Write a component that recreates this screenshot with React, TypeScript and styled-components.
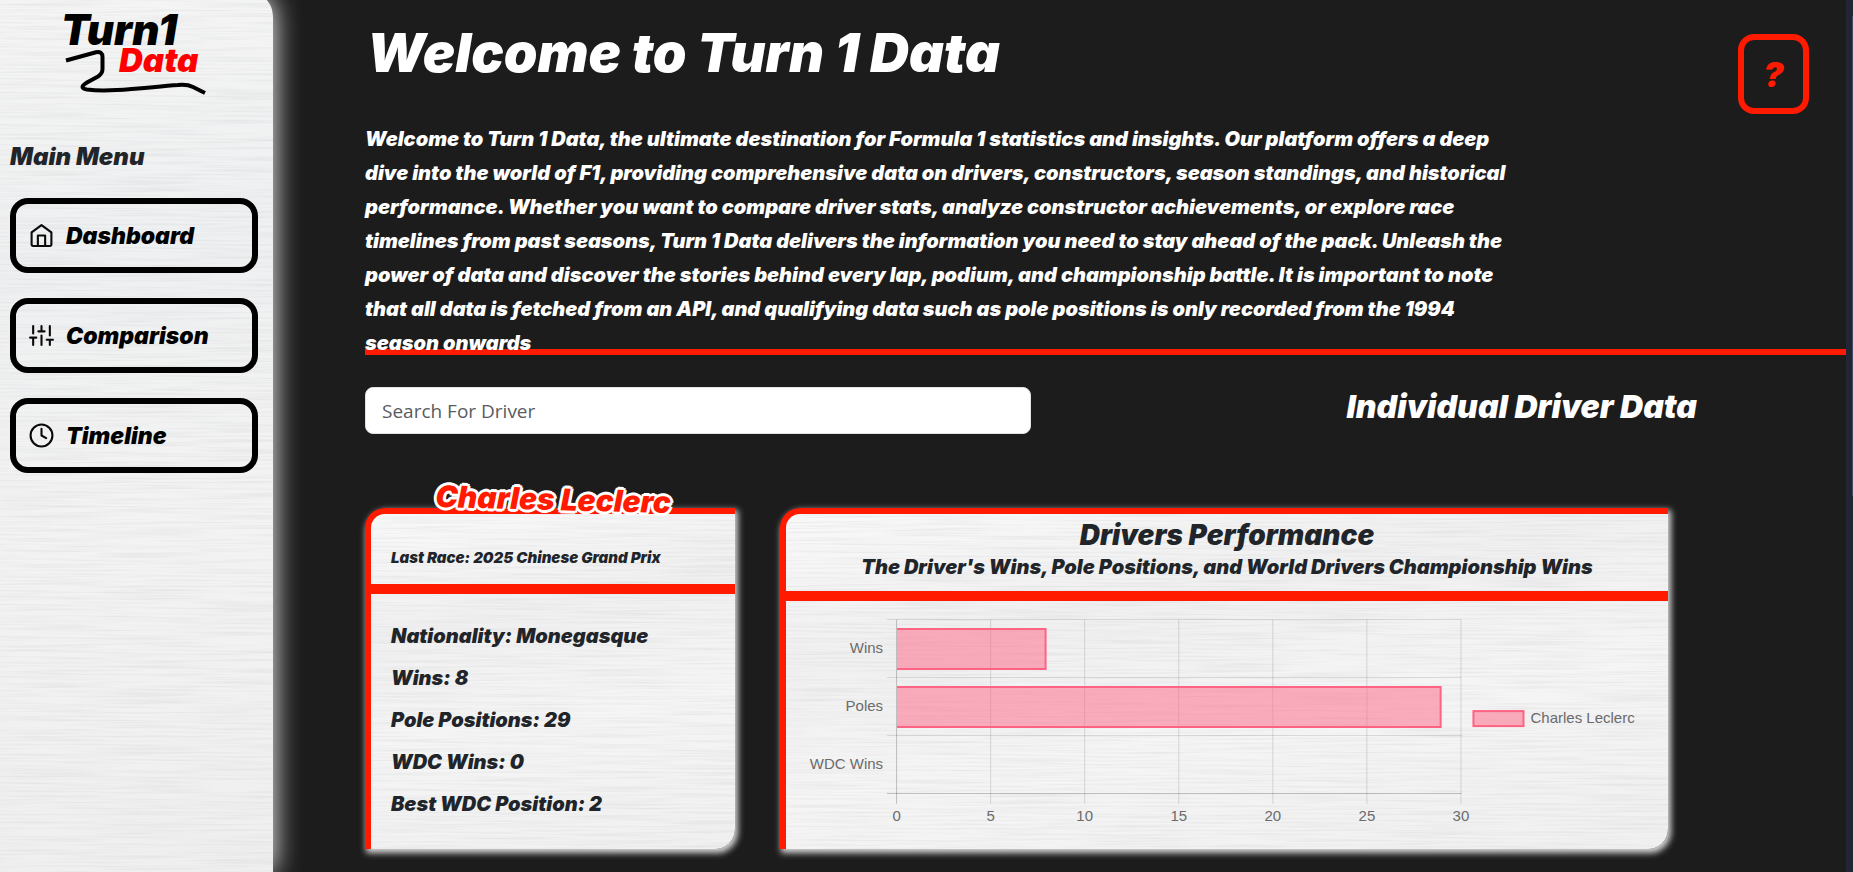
import React from 'react';
import styled, { createGlobalStyle } from 'styled-components';

const RED = '#ff1a00';
const INK = '#212529';

const GlobalStyle = createGlobalStyle`
  *, *::before, *::after { box-sizing: border-box; }
  html, body { margin: 0; background: #1c1c1c; }
  body {
    font-family: Inter, 'Liberation Sans', sans-serif;
    font-weight: 900;
    font-style: italic;
    color: ${INK};
  }
  h1, h2, h3, p, ul { margin: 0; padding: 0; font-weight: inherit; }
`;

const Page = styled.div`
  display: flex;
  min-height: 100vh;
  overflow: hidden;
`;

/* ---------- brushed metal ---------- */

const MetalLayer = styled.svg`
  position: absolute;
  inset: 0;
  width: 100%;
  height: 100%;
  border-radius: inherit;
  z-index: -1;
`;

function Metal({ seed }: { seed: number }) {
  const id = `brushed-${seed}`;
  return (
    <MetalLayer aria-hidden="true">
      <filter id={id} x="0" y="0" width="100%" height="100%">
        <feTurbulence type="fractalNoise" baseFrequency="0.01 0.5" numOctaves="3" seed={seed} />
        <feColorMatrix values="0 0 0 0 0.5  0 0 0 0 0.51  0 0 0 0 0.53  0.5 0 0 0 -0.2" />
      </filter>
      <rect width="100%" height="100%" filter={`url(#${id})`} />
    </MetalLayer>
  );
}

/* ---------- sidebar ---------- */

const Sidebar = styled.aside`
  position: relative;
  z-index: 1;
  flex: 0 0 273px;
  margin-top: -8px;
  padding: 8px 15px 0 10px;
  background: linear-gradient(170deg, #f5f5f5, #eff0f1 30%, #f3f3f3 60%, #efeff0);
  border-radius: 0 24px 0 0;
  box-shadow: 0 0 28px #ffffff;
`;

const Logo = styled.svg`
  display: block;
  width: 150px;
  height: 100px;
  margin-left: 46px;
  overflow: visible;
`;

const MenuTitle = styled.h2`
  margin: 41px 0 25px;
  font-size: 24px;
  line-height: 32px;
`;

const Nav = styled.nav`
  display: flex;
  flex-direction: column;
  gap: 25px;
`;

const NavButton = styled.button`
  display: flex;
  align-items: center;
  gap: 12px;
  height: 75px;
  padding: 0 13px;
  border: 6px solid #000;
  border-radius: 18px;
  background: transparent;
  color: #000;
  font: inherit;
  font-size: 23px;
  text-align: left;
`;

const NavIcon = styled.svg`
  width: 25px;
  height: 25px;
  fill: none;
  stroke: #0a0a0a;
  stroke-width: 2;
  stroke-linecap: round;
  stroke-linejoin: round;
`;

/* ---------- main ---------- */

const Main = styled.main`
  flex: 1;
  min-width: 0;
  padding-left: 92px;
`;

const Intro = styled.header`
  display: flex;
  justify-content: space-between;
  align-items: flex-start;
  padding: 20px 37px 0 0;
`;

const Title = styled.h1`
  padding-left: 2px;
  color: #fff;
  font-size: 54px;
  line-height: 66px;
`;

const Lead = styled.p`
  margin: 36px 0 -11px;
  color: #fff;
  font-size: 20px;
  line-height: 34px;
  white-space: nowrap;
`;

const HelpButton = styled.button`
  flex: none;
  width: 71px;
  height: 80px;
  margin-top: 14px;
  padding: 0;
  border: 6px solid ${RED};
  border-radius: 16px;
  background: transparent;
  color: ${RED};
  font: inherit;
  font-size: 34px;
`;

const Rule = styled.hr<{ $size: number }>`
  height: ${(p) => p.$size}px;
  margin: 0;
  border: 0;
  background: ${RED};
`;

const SearchRow = styled.section`
  display: flex;
  justify-content: space-between;
  align-items: flex-start;
  padding: 32px 149px 0 0;
`;

const SearchInput = styled.input`
  width: 50%;
  height: 47px;
  padding: 0 16px;
  border: 1px solid #dee2e6;
  border-radius: 8px;
  background: #fff;
  color: ${INK};
  font: 400 19px 'Open Sans', 'Noto Sans', sans-serif;
  &::placeholder { color: #595c5f; opacity: 1; }
`;

const SectionTitle = styled.h2`
  color: #fff;
  font-size: 32px;
  line-height: 40px;
`;

const Cards = styled.section`
  display: grid;
  grid-template-columns: 25% 60%;
  column-gap: 3%;
  padding: 74px 0 23px;
`;

const Card = styled.article`
  position: relative;
  z-index: 0;
  border: 0 solid ${RED};
  border-width: 6px 0 0 6px;
  border-radius: 20px 0 20px 0;
  background: linear-gradient(170deg, #f9f9f9, #f0f0f1 30%, #f5f5f5 60%, #f0f0f1);
  box-shadow: 2px 3px 6px 1px #d8d8d8;
`;

const DriverName = styled.h3`
  position: absolute;
  top: -32px;
  left: 0;
  right: 0;
  color: ${RED};
  font-size: 30px;
  line-height: 34px;
  text-align: center;
  transform: rotate(1.5deg);
  text-shadow: 3px 0 #fff, -3px 0 #fff, 0 3px #fff, 0 -3px #fff,
    2px 2px #fff, -2px 2px #fff, 2px -2px #fff, -2px -2px #fff;
`;

const LastRace = styled.p`
  padding: 32px 20px 14px;
  font-size: 15px;
  line-height: 24px;
`;

const Facts = styled.ul`
  padding: 21px 20px 24px;
  list-style: none;
  font-size: 20px;
  line-height: 42px;
`;

const ChartHeader = styled.header`
  padding: 6px 0 7px;
  text-align: center;
`;

const ChartTitle = styled.h3`
  font-size: 28px;
  line-height: 30px;
`;

const ChartNote = styled.p`
  font-size: 20px;
  line-height: 34px;
`;

const Chart = styled.svg`
  display: block;
  width: 100%;
  font: normal 400 15px 'Liberation Sans', Arial, sans-serif;
  fill: #6b6b6b;
`;

const ScrollTrack = styled.div`
  display: flex;
  flex: 0 0 7px;
  align-items: flex-start;
  justify-content: flex-end;
  padding-top: 16px;
  background: #222533;
`;

const ScrollThumb = styled.div`
  width: 1px;
  height: 480px;
  background: #474a60;
`;

/* ---------- content ---------- */

const LEAD_LINES = [
  'Welcome to Turn 1 Data, the ultimate destination for Formula 1 statistics and insights. Our platform offers a deep',
  'dive into the world of F1, providing comprehensive data on drivers, constructors, season standings, and historical',
  'performance. Whether you want to compare driver stats, analyze constructor achievements, or explore race',
  'timelines from past seasons, Turn 1 Data delivers the information you need to stay ahead of the pack. Unleash the',
  'power of data and discover the stories behind every lap, podium, and championship battle. It is important to note',
  'that all data is fetched from an API, and qualifying data such as pole positions is only recorded from the 1994',
  'season onwards',
];

const NAV_ITEMS = [
  {
    label: 'Dashboard',
    icon: (
      <>
        <path d="M2.500 9L12 2l9.500 7v11.500a1.500 1.500 0 0 1-1.500 1.500H4a1.500 1.500 0 0 1-1.500-1.500z" />
        <path d="M8.500 22V12h7v10" />
      </>
    ),
  },
  {
    label: 'Comparison',
    icon: <path d="M4 21v-7M4 10V3M12 21v-9M12 8V3M20 21v-5M20 12V3M1 14h6M9 8h6M17 16h6" />,
  },
  {
    label: 'Timeline',
    icon: (
      <>
        <circle cx="12" cy="12" r="10.500" />
        <path d="M12 5.500V12l4.500 2.500" />
      </>
    ),
  },
];

const FACTS = [
  'Nationality: Monegasque',
  'Wins: 8',
  'Pole Positions: 29',
  'WDC Wins: 0',
  'Best WDC Position: 2',
];

const BARS = [
  { label: 'Wins', value: 8 },
  { label: 'Poles', value: 29 },
  { label: 'WDC Wins', value: 0 },
];

const ORIGIN = 111;
const UNIT = 18.8;
const ROW = 58;
const TOP = 18.5;

function PerformanceChart() {
  const right = ORIGIN + UNIT * 30;
  const bottom = TOP + ROW * 3;
  return (
    <Chart viewBox="0 0 882 248" role="img" aria-label="Wins, poles and WDC wins of Charles Leclerc">
      {[0, 5, 10, 15, 20, 25, 30].map((tick) => {
        const x = Math.round(ORIGIN + UNIT * tick) - 0.5;
        return (
          <g key={tick}>
            <line x1={x} x2={x} y1={TOP} y2={bottom + 10} stroke="#000" strokeOpacity={tick ? 0.13 : 0.22} />
            <text x={x} y={220} textAnchor="middle">{tick}</text>
          </g>
        );
      })}
      {[0, 1, 2, 3].map((i) => (
        <line key={i} x1={ORIGIN - 10} x2={right} y1={TOP + ROW * i} y2={TOP + ROW * i} stroke="#000" strokeOpacity={i === 3 ? 0.22 : 0.11} />
      ))}
      {BARS.map((bar, i) => {
        const y = TOP + ROW * i + 9.5;
        const end = ORIGIN + UNIT * bar.value - 2;
        return (
          <g key={bar.label}>
            <text x={97} y={TOP + ROW * i + 33} textAnchor="end">{bar.label}</text>
            {bar.value > 0 && (
              <>
                <rect x={ORIGIN} y={y} width={end - ORIGIN} height={40} fill="#ff6384" fillOpacity={0.5} />
                <path d={`M${ORIGIN} ${y}H${end}V${y + 40}H${ORIGIN}`} fill="none" stroke="#ff6384" strokeWidth={2} />
              </>
            )}
          </g>
        );
      })}
      <rect x={687} y={110} width={50} height={15} fill="#ff6384" fillOpacity={0.5} stroke="#ff6384" strokeWidth={2} />
      <text x={744} y={122}>Charles Leclerc</text>
    </Chart>
  );
}

export default function App() {
  return (
    <Page>
      <GlobalStyle />
      <Sidebar>
        <Metal seed={3} />
        <Logo viewBox="-4 -10 150 100" role="img" aria-label="Turn1 Data">
          <text x="1" y="35" fontSize="42">Turn1</text>
          <text x="59" y="62" fontSize="33" fill="#ff0000">Data</text>
          <path
            d="M6 50.500L36 42.300Q42.500 41 42.500 47V59Q42.500 63.500 38 66.500L27 72.500Q18 78 27 79.500C50 82.500 85 77.500 118 75Q127 74 133 77L145 83"
            fill="none"
            stroke="#000"
            strokeWidth="4"
          />
        </Logo>
        <MenuTitle>Main Menu</MenuTitle>
        <Nav>
          {NAV_ITEMS.map((item) => (
            <NavButton key={item.label} type="button">
              <NavIcon viewBox="0 0 24 24" overflow="visible" aria-hidden="true">{item.icon}</NavIcon>
              {item.label}
            </NavButton>
          ))}
        </Nav>
      </Sidebar>
      <Main>
        <Intro>
          <div>
            <Title>Welcome to Turn 1 Data</Title>
            <Lead>
              {LEAD_LINES.map((line) => (
                <React.Fragment key={line}>
                  {line}
                  <br />
                </React.Fragment>
              ))}
            </Lead>
          </div>
          <HelpButton type="button" aria-label="Help">?</HelpButton>
        </Intro>
        <Rule $size={6} />
        <SearchRow>
          <SearchInput type="search" placeholder="Search For Driver" aria-label="Search For Driver" />
          <SectionTitle>Individual Driver Data</SectionTitle>
        </SearchRow>
        <Cards>
          <Card>
            <Metal seed={7} />
            <DriverName>Charles Leclerc</DriverName>
            <LastRace>Last Race: 2025 Chinese Grand Prix</LastRace>
            <Rule $size={10} />
            <Facts>
              {FACTS.map((fact) => (
                <li key={fact}>{fact}</li>
              ))}
            </Facts>
          </Card>
          <Card>
            <Metal seed={11} />
            <ChartHeader>
              <ChartTitle>Drivers Performance</ChartTitle>
              <ChartNote>The Driver's Wins, Pole Positions, and World Drivers Championship Wins</ChartNote>
            </ChartHeader>
            <Rule $size={10} />
            <PerformanceChart />
          </Card>
        </Cards>
      </Main>
      <ScrollTrack>
        <ScrollThumb />
      </ScrollTrack>
    </Page>
  );
}
